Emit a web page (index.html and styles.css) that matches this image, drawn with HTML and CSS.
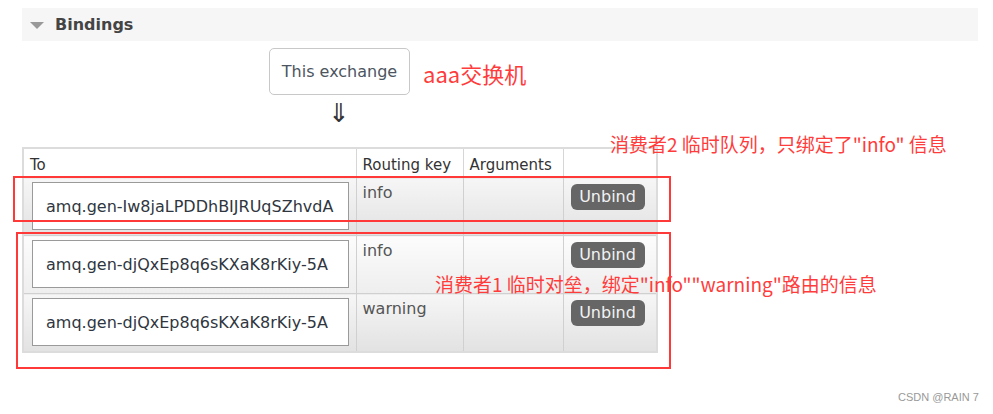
FILE: index.html
```html
<!DOCTYPE html>
<html>
<head>
<meta charset="utf-8">
<link rel="stylesheet" href="styles.css">
</head>
<body>
<div class="page">
  <div class="section-head"><span class="tri"></span><span class="title">Bindings</span></div>
  <div class="exchange-row">
    <div class="exchange">This exchange</div>
    <span class="note note-a">aaa交换机</span>
  </div>
  <div class="arrow">⇓</div>
  <table class="bindings">
    <colgroup>
      <col class="c-to"><col class="c-rk"><col class="c-arg"><col class="c-act">
    </colgroup>
    <thead>
      <tr><th>To</th><th>Routing key</th><th>Arguments</th><th></th></tr>
    </thead>
    <tbody>
      <tr class="alt2"><td><div class="queue">amq.gen-Iw8jaLPDDhBIJRUqSZhvdA</div></td><td>info</td><td></td><td><span class="btn">Unbind</span></td></tr>
      <tr class="alt1"><td><div class="queue">amq.gen-djQxEp8q6sKXaK8rKiy-5A</div></td><td>info</td><td></td><td><span class="btn">Unbind</span></td></tr>
      <tr class="alt2"><td><div class="queue">amq.gen-djQxEp8q6sKXaK8rKiy-5A</div></td><td>warning</td><td></td><td><span class="btn">Unbind</span></td></tr>
    </tbody>
  </table>
  <div class="mark mark-1"></div>
  <div class="mark mark-2"></div>
  <span class="note note-2">消费者2 临时队列，只绑定了"info" 信息</span>
  <span class="note note-1">消费者1 临时对垒，绑定"info""warning"路由的信息</span>
  <span class="wm">CSDN @RAIN 7</span>
</div>
</body>
</html>
```

FILE: styles.css
```css
html, body {
  margin: 0;
  padding: 0;
  background: #fff;
}
.page {
  position: relative;
  width: 993px;
  height: 414px;
  overflow: hidden;
  padding-top: 8px;
  box-sizing: border-box;
  font-family: "DejaVu Sans", Verdana, sans-serif;
  color: #484848;
}
.section-head {
  margin-left: 22px;
  width: 956px;
  height: 33px;
  background: #f6f6f6;
  display: flex;
  align-items: center;
}
.tri {
  width: 0;
  height: 0;
  margin-left: 8px;
  margin-top: 1px;
  border-left: 7px solid transparent;
  border-right: 7px solid transparent;
  border-top: 7px solid #999;
}
.title {
  margin-left: 11px;
  font-weight: bold;
  font-size: 16px;
  color: #444;
}
.exchange-row {
  display: flex;
  align-items: center;
  margin-top: 7px;
  margin-left: 269px;
}
.exchange {
  width: 141px;
  height: 47px;
  box-sizing: border-box;
  border: 1px solid #c8c8c8;
  border-radius: 5px;
  display: flex;
  align-items: center;
  justify-content: center;
  font-size: 16px;
  color: #4c5560;
}
.note {
  font-family: "Noto Sans CJK SC", "Noto Sans", sans-serif;
  color: #ff3c3c;
  white-space: nowrap;
}
.note-a {
  font-size: 22px;
  margin-left: 13px;
  margin-top: 2px;
}
.arrow {
  margin-left: 328px;
  margin-top: 3px;
  height: 30px;
  font-size: 26px;
  line-height: 30px;
  color: #333;
  font-family: "DejaVu Sans", sans-serif;
}
.bindings {
  margin-left: 22px;
  margin-top: 19px;
  width: 634px;
  table-layout: fixed;
  border-collapse: collapse;
  border: 2px solid #dcdcdc;
  font-size: 16px;
}
.c-to { width: 333px; }
.c-rk { width: 107px; }
.c-arg { width: 100px; }
.c-act { width: 94px; }
.bindings th {
  background: #fff;
  font-weight: normal;
  font-size: 15px;
  text-align: left;
  white-space: nowrap;
  height: 24px;
  padding: 4px 6px 0 6px;
  color: #333;
  border: 1px solid #d6d6d6;
  vertical-align: middle;
}
.bindings td {
  border: 1px solid #d0d0d0;
  padding: 5px 6px 5px 6px;
  height: 47px;
  vertical-align: top;
  color: #555;
}
.bindings td:first-child {
  padding: 4px 7px 5px 8px;
}
tr.alt2 td {
  background: linear-gradient(#f6f6f6, #e2e2e2);
}
tr.alt1 td {
  background: linear-gradient(#fcfcfc, #eeeeee);
}
.queue {
  box-sizing: border-box;
  height: 48px;
  background: #fff;
  border: 1px solid #9a9a9a;
  display: flex;
  align-items: center;
  padding-left: 13px;
  color: #2f3640;
  font-size: 16px;
  white-space: nowrap;
}
.btn {
  display: inline-block;
  margin-top: 1px;
  margin-left: 1px;
  width: 74px;
  height: 26px;
  line-height: 26px;
  text-align: center;
  background: #666;
  color: #f2f2f2;
  border-radius: 6px;
  font-size: 16px;
}
.mark {
  position: absolute;
  border: 2px solid #ff3838;
  box-sizing: border-box;
}
.mark-1 { left: 13px; top: 176px; width: 658px; height: 46px; }
.mark-2 { left: 16px; top: 232px; width: 655px; height: 137px; }
.note-2 {
  position: absolute;
  left: 610px;
  top: 131px;
  font-size: 19px;
  line-height: 26px;
}
.note-1 {
  position: absolute;
  left: 435px;
  top: 271px;
  font-size: 19px;
  line-height: 26px;
}
.wm {
  position: absolute;
  left: 898px;
  top: 391px;
  font-family: "Liberation Sans", Arial, sans-serif;
  font-size: 11px;
  color: #999;
}
```
